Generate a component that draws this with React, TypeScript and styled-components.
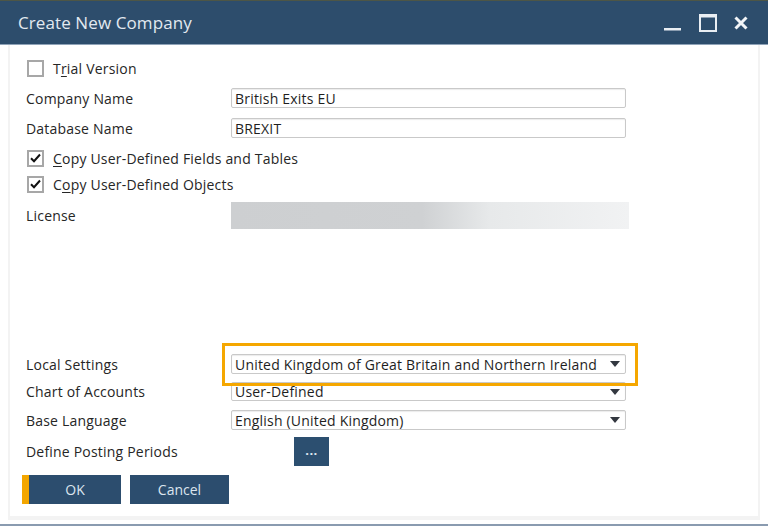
import React from "react";
import styled, { createGlobalStyle } from "styled-components";

const GlobalStyle = createGlobalStyle`
  html, body {
    margin: 0;
    padding: 0;
    background: #ffffff;
  }
  body {
    font-family: "Open Sans", "Noto Sans", sans-serif;
    color: #222222;
  }
`;

const Window = styled.div`
  width: 768px;
  height: 526px;
  display: flex;
  flex-direction: column;
  background: #ffffff;
  border-top: 1px solid #4d5646;
  box-sizing: border-box;
`;

const TitleBar = styled.div`
  height: 43px;
  flex: none;
  display: flex;
  align-items: center;
  justify-content: space-between;
  background: #2d4d6c;
  padding: 0 20px 0 18px;
  border-bottom: 1px solid #8fa3b8;
`;

const Title = styled.div`
  color: #e2e9f0;
  font-size: 17px;
  letter-spacing: 0.1px;
`;

const Controls = styled.div`
  display: flex;
  align-items: center;
  gap: 17px;
`;

const Body = styled.div`
  flex: 1;
  padding: 0 8px 4px 8px;
  display: flex;
  flex-direction: column;
  border-bottom: 2px solid #8a9bb0;
`;

const Panel = styled.div`
  flex: 1;
  border: 2px solid #f3f3f3;
  border-top: none;
  border-bottom-width: 4px;
  padding: 13px 16px 12px 16px;
  display: flex;
  flex-direction: column;
`;

const Row = styled.div<{ $h: number; $mt?: number }>`
  height: ${(p) => p.$h}px;
  margin-top: ${(p) => p.$mt ?? 0}px;
  display: flex;
  align-items: center;
  position: relative;
  font-size: 14px;
  letter-spacing: 0.2px;
`;

const Label = styled.div`
  width: 205px;
  flex: none;
  color: #262626;
`;

const Field = styled.div<{ $w?: number }>`
  position: relative;
  width: ${(p) => p.$w ?? 395}px;
  height: 100%;
  box-sizing: border-box;
`;

const TextBox = styled.div`
  height: 100%;
  box-sizing: border-box;
  border: 1px solid #c9c9c9;
  border-radius: 2px;
  box-shadow: inset 0 1px 1px rgba(0, 0, 0, 0.08);
  padding: 0 3px;
  display: flex;
  align-items: center;
  color: #1e1e1e;
  background: #ffffff;
`;

const Combo = styled(TextBox)`
  justify-content: space-between;
  padding-right: 5px;
`;

const Arrow = styled.span`
  width: 0;
  height: 0;
  border-left: 5px solid transparent;
  border-right: 5px solid transparent;
  border-top: 6px solid #333840;
`;

const Highlight = styled.div`
  position: absolute;
  top: -11px;
  left: -9px;
  right: -12px;
  bottom: -12px;
  border: 3px solid #f5a700;
  pointer-events: none;
  z-index: 2;
`;

const CheckRow = styled.label`
  display: flex;
  align-items: center;
  gap: 9px;
  margin-left: 1px;
  color: #262626;
`;

const Box = styled.span`
  width: 17px;
  height: 17px;
  box-sizing: border-box;
  border: 2px solid #a7a7a7;
  background: #ffffff;
  display: flex;
  align-items: center;
  justify-content: center;
`;

const Key = styled.span`
  text-decoration: underline;
  text-underline-offset: 2px;
`;

const LicenseBar = styled.div`
  width: 398px;
  height: 100%;
  background: linear-gradient(
    90deg,
    #cdcfd1 0%,
    #cfd1d3 48%,
    #e7e9ea 65%,
    #f1f2f3 100%
  );
`;

const Spacer = styled.div`
  flex: 1;
`;

const SmallButton = styled.button`
  margin-left: 63px;
  width: 35px;
  height: 29px;
  border: none;
  background: #2c4f70;
  color: #dfe8f2;
  font-size: 13px;
  font-weight: 700;
  letter-spacing: 0.5px;
  padding: 0 0 4px;
  font-family: "Open Sans", sans-serif;
`;

const Buttons = styled.div`
  display: flex;
  gap: 9px;
  margin-top: 9px;
  margin-left: -4px;
`;

const Button = styled.button<{ $primary?: boolean }>`
  width: 99px;
  height: 29px;
  border: none;
  border-left: ${(p) => (p.$primary ? "7px solid #f3a600" : "none")};
  background: #2c4d6e;
  color: #dce5ee;
  font-family: "Open Sans", sans-serif;
  font-size: 14px;
  padding: 0;
  box-sizing: border-box;
`;

const CheckMark = () => (
  <svg width="11" height="10" viewBox="0 0 11 10">
    <path d="M1 5.2 L4 8.2 L10 1.5" fill="none" stroke="#111" strokeWidth="2" />
  </svg>
);

const Check = ({ checked, children }: { checked?: boolean; children: React.ReactNode }) => (
  <CheckRow>
    <Box>{checked && <CheckMark />}</Box>
    <span>{children}</span>
  </CheckRow>
);

const WindowControls = () => (
  <Controls>
    <svg width="18" height="18" viewBox="0 0 18 18">
      <rect x="0" y="14" width="17" height="2.5" fill="#e9eef3" />
    </svg>
    <svg width="18" height="18" viewBox="0 0 18 18">
      <rect x="1" y="1" width="16" height="16" fill="none" stroke="#e9eef3" strokeWidth="2" />
      <rect x="1" y="1" width="16" height="2.5" fill="#e9eef3" />
    </svg>
    <svg width="14" height="14" viewBox="0 0 14 14">
      <path d="M1.5 1.5 L12.5 12.5 M12.5 1.5 L1.5 12.5" stroke="#f2f5f8" strokeWidth="3" />
    </svg>
  </Controls>
);

export default function App() {
  return (
    <>
      <GlobalStyle />
      <Window>
        <TitleBar>
          <Title>Create New Company</Title>
          <WindowControls />
        </TitleBar>
        <Body>
          <Panel>
            <Row $h={20}>
              <Check>
                T<Key>r</Key>ial Version
              </Check>
            </Row>
            <Row $h={20} $mt={10}>
              <Label>Company Name</Label>
              <Field>
                <TextBox>British Exits EU</TextBox>
              </Field>
            </Row>
            <Row $h={20} $mt={10}>
              <Label>Database Name</Label>
              <Field>
                <TextBox>BREXIT</TextBox>
              </Field>
            </Row>
            <Row $h={20} $mt={10}>
              <Check checked>
                <Key>C</Key>opy User-Defined Fields and Tables
              </Check>
            </Row>
            <Row $h={20} $mt={6}>
              <Check checked>
                C<Key>o</Key>py User-Defined Objects
              </Check>
            </Row>
            <Row $h={27} $mt={8}>
              <Label>License</Label>
              <LicenseBar />
            </Row>
            <Spacer />
            <Row $h={20}>
              <Label>Local Settings</Label>
              <Field>
                <Combo>
                  <span>United Kingdom of Great Britain and Northern Ireland</span>
                  <Arrow />
                </Combo>
                <Highlight />
              </Field>
            </Row>
            <Row $h={19} $mt={8}>
              <Label>Chart of Accounts</Label>
              <Field>
                <Combo>
                  <span>User-Defined</span>
                  <Arrow />
                </Combo>
              </Field>
            </Row>
            <Row $h={20} $mt={9}>
              <Label>Base Language</Label>
              <Field>
                <Combo>
                  <span>English (United Kingdom)</span>
                  <Arrow />
                </Combo>
              </Field>
            </Row>
            <Row $h={29} $mt={7}>
              <Label>Define Posting Periods</Label>
              <SmallButton>...</SmallButton>
            </Row>
            <Buttons>
              <Button $primary>OK</Button>
              <Button>Cancel</Button>
            </Buttons>
          </Panel>
        </Body>
      </Window>
    </>
  );
}
